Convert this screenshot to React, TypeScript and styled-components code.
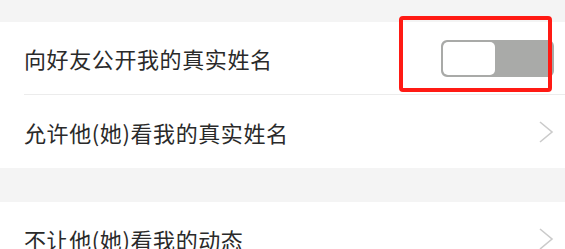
import React from "react";
import styled, { createGlobalStyle } from "styled-components";

const Global = createGlobalStyle`
  html, body { margin: 0; padding: 0; background: #f4f4f4; }
  body { font-family: "Noto Sans CJK SC", "Noto Sans", sans-serif; }
`;

const Page = styled.div`
  width: 565px;
  height: 249px;
  overflow: hidden;
  background: #f4f4f4;
  display: flex;
  flex-direction: column;
  position: relative;
`;

const Spacer = styled.div<{ $h: number }>`
  height: ${(p) => p.$h}px;
  flex: none;
`;

const Group = styled.div`
  background: #fff;
  display: flex;
  flex-direction: column;
`;

const Row = styled.div<{ $divider?: boolean }>`
  height: 73px;
  display: flex;
  align-items: center;
  margin-left: 24px;
  padding-right: 11px;
  box-sizing: border-box;
  border-bottom: ${(p) => (p.$divider ? "1px solid #ececec" : "none")};
  flex: none;
`;

const Label = styled.span`
  flex: 1;
  font-size: 22px;
  color: #2a2a2a;
  letter-spacing: 0.6px;
  line-height: 1;
`;

const Switch = styled.div`
  width: 113px;
  height: 37px;
  box-sizing: border-box;
  border: 2px solid #a9aaa8;
  border-radius: 6px;
  background: #a9aaa8;
  display: flex;
  overflow: hidden;
`;

const Thumb = styled.div`
  width: 52px;
  height: 100%;
  background: #fff;
  border-radius: 5px;
`;

const Highlight = styled.div`
  position: absolute;
  left: 399px;
  top: 16px;
  width: 153px;
  height: 76px;
  box-sizing: border-box;
  border: 4px solid #ff1a14;
  border-radius: 4px;
  pointer-events: none;
`;

const Chevron = () => (
  <svg width="16" height="24" viewBox="0 0 16 24" fill="none">
    <path d="M2 2 L14 12 L2 22" stroke="#cbcbcb" strokeWidth="1.6" strokeLinejoin="miter" />
  </svg>
);

export default function App() {
  return (
    <>
      <Global />
      <Page>
        <Spacer $h={22} />
        <Group>
          <Row $divider>
            <Label>向好友公开我的真实姓名</Label>
            <Switch>
              <Thumb />
            </Switch>
          </Row>
          <Row>
            <Label>允许他(她)看我的真实姓名</Label>
            <Chevron />
          </Row>
        </Group>
        <Spacer $h={34} />
        <Group>
          <Row>
            <Label>不让他(她)看我的动态</Label>
            <Chevron />
          </Row>
        </Group>
        <Highlight />
      </Page>
    </>
  );
}
